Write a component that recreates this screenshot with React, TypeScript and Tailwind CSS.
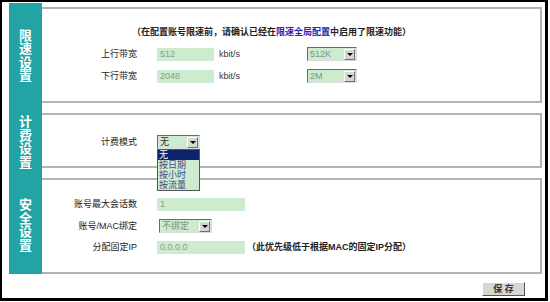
import React from 'react';

const FONT = '"Liberation Sans", "Noto Sans CJK SC", sans-serif';

const Arrow = () => (
  <span className="w-[11px] h-[11px] mr-[1px] bg-[#d6d6d6] border border-t-white border-l-white border-b-[#6f6f6f] border-r-[#6f6f6f] flex items-center justify-center">
    <span className="w-0 h-0 border-l-[3px] border-r-[3px] border-t-[3px] border-l-transparent border-r-transparent border-t-black" />
  </span>
);

const Select: React.FC<{ value: string; width: string; dark?: boolean }> = ({ value, width, dark }) => (
  <div
    className={`flex items-center h-[14px] ${width} bg-[#cdeccf] border border-t-[#6b6b6b] border-l-[#6b6b6b] border-b-[#dcdcdc] border-r-[#dcdcdc]`}
  >
    <span className={`flex-1 pl-[2px] leading-none ${dark ? 'text-[#333]' : 'text-[#7d917d]'}`}>{value}</span>
    <Arrow />
  </div>
);

const Input: React.FC<{ value: string; width: string }> = ({ value, width }) => (
  <div className={`h-[13px] ${width} bg-[#cdeccf] pl-[3px] flex items-center text-[#86a086] leading-none`}>{value}</div>
);

const Label: React.FC<{ text: string }> = ({ text }) => (
  <span className="w-[95px] text-right text-[#222] leading-none">{text}</span>
);

const SideLabel: React.FC<{ text: string; h: string }> = ({ text, h }) => (
  <div className={`${h} flex flex-col items-center justify-center`}>
    {text.split('').map((c, i) => (
      <span key={i} className="text-white font-bold text-[13px] leading-[13.5px]">{c}</span>
    ))}
  </div>
);

const box = 'border-2 border-l-0 border-[#b3b3b3]';

export default function App() {
  return (
    <div
      className="w-[548px] h-[301px] bg-white border-black border-l-2 border-t-2 border-r-[3px] border-b-[3px] flex flex-col pl-[7px] pr-[3px] pt-[1px] text-[9px]"
      style={{ fontFamily: FONT }}
    >
      <div className="flex h-[271px]">
        {/* teal side */}
        <div className="w-[33px] bg-[#22a4a5] flex flex-col">
          <SideLabel text="限速设置" h="h-[105px]" />
          <SideLabel text="计费设置" h="h-[68px]" />
          <SideLabel text="安全设置" h="h-[98px]" />
        </div>

        <div className="flex-1 flex flex-col pt-[4px] gap-[10px]">
          {/* speed limit */}
          <div className={`${box} h-[96px] pt-[17px]`}>
            <div className="pl-[90px] font-bold text-[#222] leading-[12px]">
              （在配置账号限速前，请确认已经在<span className="text-[#2424b0]">限速全局配置</span>中启用了限速功能）
            </div>
            <div className="flex items-center h-[14px] mt-[9px]">
              <Label text="上行带宽" />
              <div className="ml-[20px]"><Input value="512" width="w-[57px]" /></div>
              <span className="w-[93px] pl-[5px] text-[#333] leading-none">kbit/s</span>
              <Select value="512K" width="w-[50px]" />
            </div>
            <div className="flex items-center h-[14px] mt-[8px]">
              <Label text="下行带宽" />
              <div className="ml-[20px]"><Input value="2048" width="w-[57px]" /></div>
              <span className="w-[93px] pl-[5px] text-[#333] leading-none">kbit/s</span>
              <Select value="2M" width="w-[50px]" />
            </div>
          </div>

          {/* billing */}
          <div className={`${box} h-[55px] flex items-center pt-[3px]`}>
            <Label text="计费模式" />
            <div className="ml-[20px] relative z-10">
              <Select value="无" width="w-[43px]" dark />
              <div className="absolute top-full left-0 w-[43px] bg-[#cdeccf] border border-[#555] flex flex-col text-[#3b4b86]">
                <span className="h-[10px] leading-[10px] pl-[1px] bg-[#0a246a] text-white">无</span>
                <span className="h-[10px] leading-[10px] pl-[1px]">按日期</span>
                <span className="h-[10px] leading-[10px] pl-[1px]">按小时</span>
                <span className="h-[10px] leading-[10px] pl-[1px]">按流量</span>
              </div>
            </div>
          </div>

          {/* security */}
          <div className={`${box} h-[96px] pt-[17px]`}>
            <div className="flex items-center h-[14px]">
              <Label text="账号最大会话数" />
              <div className="ml-[20px]"><Input value="1" width="w-[88px]" /></div>
            </div>
            <div className="flex items-center h-[14px] mt-[8px]">
              <Label text="账号/MAC绑定" />
              <div className="ml-[22px]"><Select value="不绑定" width="w-[53px]" /></div>
            </div>
            <div className="flex items-center h-[14px] mt-[7px]">
              <Label text="分配固定IP" />
              <div className="ml-[20px]"><Input value="0.0.0.0" width="w-[88px]" /></div>
              <span className="ml-[2px] font-bold text-[#222] leading-none">（此优先级低于根据MAC的固定IP分配）</span>
            </div>
          </div>
        </div>
      </div>

      <div className="flex justify-end pr-[17px] mt-[8px]">
        <button className="w-[43px] h-[14px] bg-[#d6d6d6] border border-t-white border-l-white border-b-[#555] border-r-[#555] font-bold text-[#333] text-[9px] leading-none flex items-center justify-center">
          保 存
        </button>
      </div>
    </div>
  );
}
